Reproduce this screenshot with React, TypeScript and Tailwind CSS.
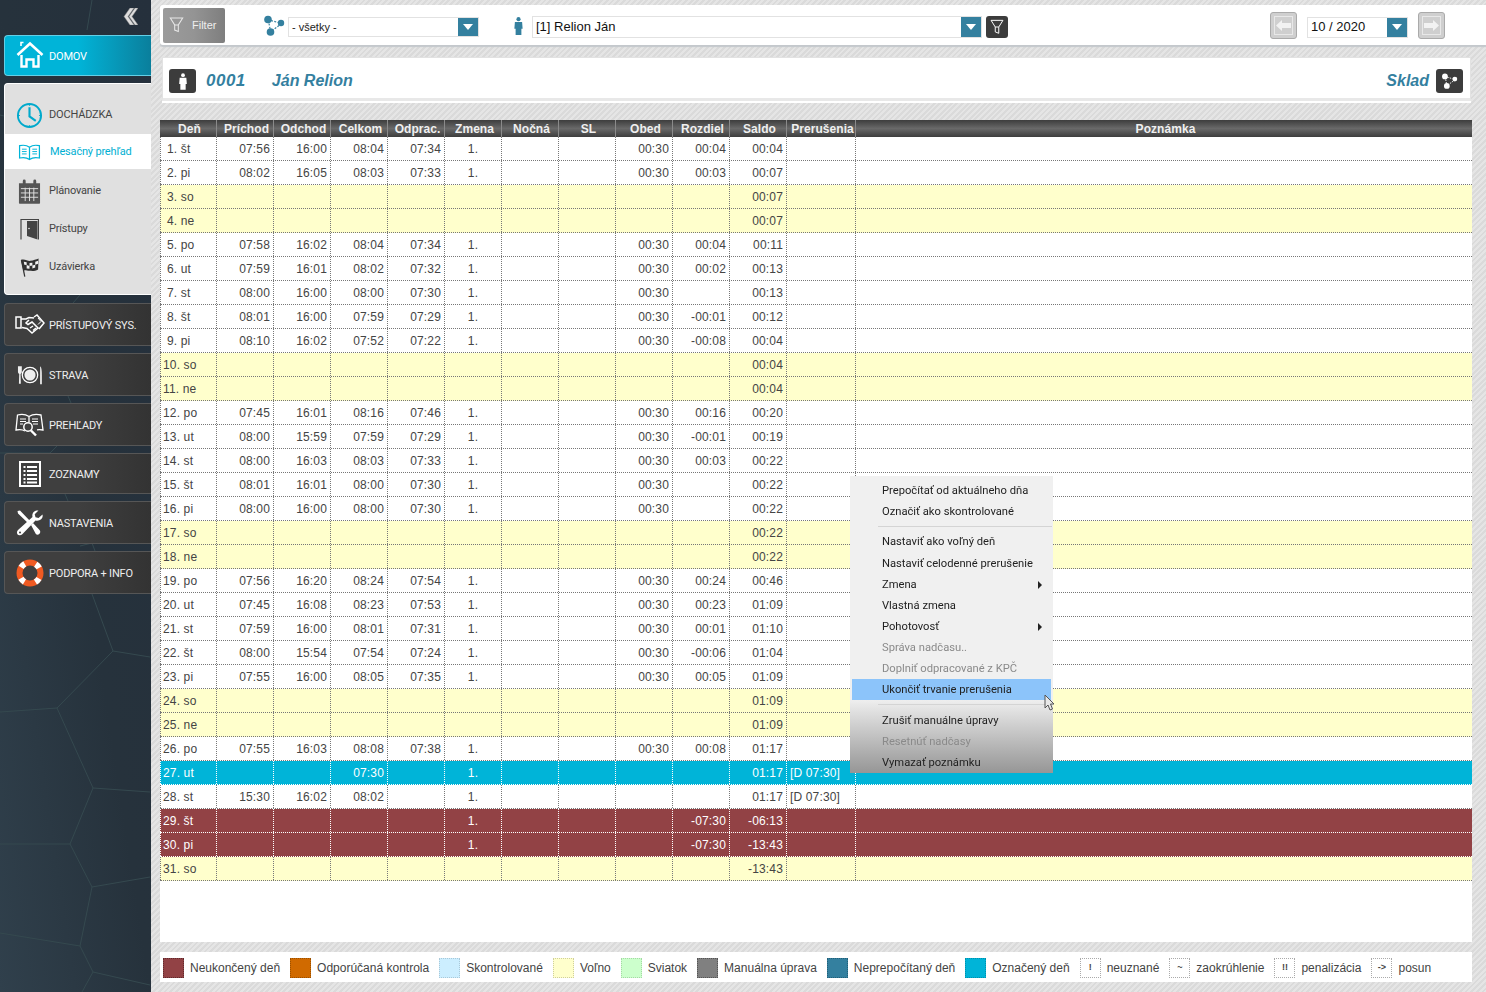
import type { ReactNode } from "react";

const COLS =
  "grid grid-cols-[57px_57px_57px_57px_57px_57px_57px_57px_57px_57px_57px_69px_1fr]";

type Kind = "work" | "free" | "marked" | "late";

interface Row {
  day: string;
  kind: Kind;
  cells: string[];
  saldo: string;
  note?: string;
}

// prichod, odchod, celkom, odprac, zmena, nocna, sl, obed, rozdiel
function w(day: string, a: string, b: string, c: string, d: string, diff: string, saldo: string): Row {
  return { day, kind: "work", cells: [a, b, c, d, "1.", "", "", "00:30", diff], saldo };
}
function f(day: string, saldo: string): Row {
  return { day, kind: "free", cells: ["", "", "", "", "", "", "", "", ""], saldo };
}

const rows: Row[] = [
  w("1. št", "07:56", "16:00", "08:04", "07:34", "00:04", "00:04"),
  w("2. pi", "08:02", "16:05", "08:03", "07:33", "00:03", "00:07"),
  f("3. so", "00:07"),
  f("4. ne", "00:07"),
  w("5. po", "07:58", "16:02", "08:04", "07:34", "00:04", "00:11"),
  w("6. ut", "07:59", "16:01", "08:02", "07:32", "00:02", "00:13"),
  w("7. st", "08:00", "16:00", "08:00", "07:30", "", "00:13"),
  w("8. št", "08:01", "16:00", "07:59", "07:29", "-00:01", "00:12"),
  w("9. pi", "08:10", "16:02", "07:52", "07:22", "-00:08", "00:04"),
  f("10. so", "00:04"),
  f("11. ne", "00:04"),
  w("12. po", "07:45", "16:01", "08:16", "07:46", "00:16", "00:20"),
  w("13. ut", "08:00", "15:59", "07:59", "07:29", "-00:01", "00:19"),
  w("14. st", "08:00", "16:03", "08:03", "07:33", "00:03", "00:22"),
  w("15. št", "08:01", "16:01", "08:00", "07:30", "", "00:22"),
  w("16. pi", "08:00", "16:00", "08:00", "07:30", "", "00:22"),
  f("17. so", "00:22"),
  f("18. ne", "00:22"),
  w("19. po", "07:56", "16:20", "08:24", "07:54", "00:24", "00:46"),
  w("20. ut", "07:45", "16:08", "08:23", "07:53", "00:23", "01:09"),
  w("21. st", "07:59", "16:00", "08:01", "07:31", "00:01", "01:10"),
  w("22. št", "08:00", "15:54", "07:54", "07:24", "-00:06", "01:04"),
  w("23. pi", "07:55", "16:00", "08:05", "07:35", "00:05", "01:09"),
  f("24. so", "01:09"),
  f("25. ne", "01:09"),
  w("26. po", "07:55", "16:03", "08:08", "07:38", "00:08", "01:17"),
  { day: "27. ut", kind: "marked", cells: ["", "", "07:30", "", "1.", "", "", "", ""], saldo: "01:17", note: "[D 07:30]" },
  { day: "28. st", kind: "work", cells: ["15:30", "16:02", "08:02", "", "1.", "", "", "", ""], saldo: "01:17", note: "[D 07:30]" },
  { day: "29. št", kind: "late", cells: ["", "", "", "", "1.", "", "", "", "-07:30"], saldo: "-06:13" },
  { day: "30. pi", kind: "late", cells: ["", "", "", "", "1.", "", "", "", "-07:30"], saldo: "-13:43" },
  { day: "31. so", kind: "free", cells: ["", "", "", "", "", "", "", "", ""], saldo: "-13:43" },
];

const headers = ["Deň", "Príchod", "Odchod", "Celkom", "Odprac.", "Zmena", "Nočná", "SL", "Obed", "Rozdiel", "Saldo", "Prerušenia", "Poznámka"];

const kindClass: Record<Kind, string> = {
  work: "bg-white text-[#444] border-[#777]",
  free: "bg-[#ffffcc] text-[#444] border-[#777]",
  marked: "bg-[#00b4d8] text-white border-white",
  late: "bg-[#924245] text-white border-white",
};

function Funnel({ className }: { className: string }) {
  return (
    <svg viewBox="0 0 20 22" className={className} fill="none" stroke="currentColor" strokeWidth="1.4">
      <path d="M1.5 1.5h17L12.5 11v9l-5-2v-7z" />
      <path d="M7.5 11h5" />
    </svg>
  );
}

function Nodes({ className }: { className: string }) {
  return (
    <svg viewBox="0 0 22 21" className={className} fill="currentColor">
      <circle cx="5" cy="4.5" r="3.8" />
      <circle cx="18" cy="8" r="3.2" />
      <circle cx="7.5" cy="17" r="3.8" />
      <path d="M8 5.5l7 2M16 10.5l-6 4.5M6 8.5l1 5" stroke="currentColor" strokeWidth="1.2" strokeDasharray="2 1.4" />
    </svg>
  );
}

function Person({ className }: { className: string }) {
  return (
    <svg viewBox="0 0 12 20" className={className} fill="currentColor">
      <circle cx="6" cy="2.4" r="2.3" />
      <path d="M2 5.6h8l.6 7.4H9.2V20H2.8v-7H1.4z" />
    </svg>
  );
}

function Arrow() {
  return (
    <div className="w-[20px] self-stretch bg-[#34809f] flex items-center justify-center">
      <div className="w-0 h-0 border-x-[5px] border-x-transparent border-t-[6px] border-t-white" />
    </div>
  );
}

function ArrowBtn({ dir }: { dir: "l" | "r" }) {
  return (
    <div className="w-[27px] h-[27px] rounded-[3px] border border-[#aaa] bg-[#cfcfcf] flex items-center justify-center">
      <div className="w-[19px] h-[19px] border border-[#e8e8e8] flex items-center justify-center">
        <svg viewBox="0 0 15 11" className={`w-[15px] h-[11px] text-[#f2f2f2] ${dir === "r" ? "rotate-180" : ""}`} fill="currentColor">
          <path d="M0 5.5L6 0v3h9v5H6v3z" />
        </svg>
      </div>
    </div>
  );
}

const iconHome = (
  <svg viewBox="0 0 28 27" className="w-[28px] h-[27px] -mt-[3px]" fill="none" stroke="white">
    <path d="M1.5 14L14 2.5 26.5 14" strokeWidth="2.6" />
    <path d="M5 5V1.5h2.5" strokeWidth="1.6" />
    <path d="M5.5 14v11.5h5V18.5h7v7h5V14" strokeWidth="2.4" />
  </svg>
);
const iconClock = (
  <svg viewBox="0 0 28 28" className="w-[27px] h-[27px]" fill="none" stroke="#00a9cc">
    <circle cx="14" cy="14" r="12" strokeWidth="2" />
    <path d="M14 5.5V15l6.5 4.5" strokeWidth="2.2" />
    <path d="M14 2v2M14 24v2M2 14h2M24 14h2" strokeWidth="1.2" />
  </svg>
);
const iconBook = (
  <svg viewBox="0 0 24 18" className="w-[23px] h-[17px]" fill="none" stroke="#00b4d8" strokeWidth="1.3">
    <path d="M12 3.5C9.5 1.5 5 1 1.5 1.8v13C5 14 9.5 14.5 12 16.5c2.5-2 7-2.5 10.5-1.7v-13C19 1 14.5 1.5 12 3.5zM12 3.5v13" />
    <path d="M4 5.5h5M4 8h5M4 10.5h5M15 5.5h5M15 8h5M15 10.5h5" strokeWidth="1" />
  </svg>
);
const iconCalendar = (
  <svg viewBox="0 0 24 26" className="w-[23px] h-[25px]" fill="#555">
    <path d="M1 4.5h22V25a.8.8 0 0 1-.8.8H1.8A.8.8 0 0 1 1 25z" />
    <rect x="5" y="0.5" width="3" height="7" rx="1.5" />
    <rect x="16" y="0.5" width="3" height="7" rx="1.5" />
    <path d="M3 10h18M3 14.5h18M3 19h18M7.5 9v14M12 9v14M16.5 9v14" stroke="#e0e0e0" strokeWidth="1" />
  </svg>
);
const iconDoor = (
  <svg viewBox="0 0 19 21" className="w-[19px] h-[21px]">
    <path d="M1 20.5V.5h17.5v20" fill="none" stroke="#444" strokeWidth="1.2" />
    <path d="M7 2h10.5v18.5L7 17z" fill="#444" />
    <circle cx="9" cy="9.5" r="0.8" fill="#eee" />
  </svg>
);
const iconFlag = (
  <svg viewBox="0 0 21 22" className="w-[20px] h-[21px]">
    <path d="M1 3c4-1.5 7 1.5 10 1s6-1.500 8.500-2.500L19 13c-3 2-6 1.500-9 1.500S5 13 3.500 14.500z" fill="#333" />
    <path d="M4 5l3 .5v3L4.500 8zM10 6.200l3-.3v3l-3 .4zM16 5l3-1v3l-3 1zM7 8.500l3 .8v3L7 12zM13 9l3-1v3l-3 1z" fill="#f2f2f2" />
    <path d="M1.500 3l3.500 17.500" stroke="#333" strokeWidth="1.300" />
  </svg>
);
const iconShake = (
  <svg viewBox="0 0 30 22" className="w-[30px] h-[22px]" fill="none" stroke="white" strokeWidth="1.500">
    <path d="M1 3h5v11H1zM6 5h5l3-1.500 5 .5M14 6l-3 3 2 1.500 4-2.500 6 6-6 5-5-4.500-5-1M19 3l3-2 7 8-5 6" />
    <path d="M18 12l-3 2M21 14l-3 2.500" />
    <path d="M23 4l3 3.500-3 3" strokeWidth="1" />
  </svg>
);
const iconPlate = (
  <svg viewBox="0 0 27 20" className="w-[26px] h-[20px]">
    <circle cx="13.500" cy="10" r="8" fill="none" stroke="white" strokeWidth="1.300" />
    <circle cx="13.500" cy="10" r="5.800" fill="#eee" />
    <path d="M1 1v5.500c0 1.500 1 2 1.300 2.500l-.300 10h2l-.300-10c.300-.500 1.300-1 1.300-2.500V1" fill="#eee" />
    <path d="M24 1c1.500 1 1.800 4 1.800 9v9.500H24z" fill="#eee" />
  </svg>
);
const iconReports = (
  <svg viewBox="0 0 29 24" className="w-[29px] h-[24px]" fill="none" stroke="white" strokeWidth="1.300">
    <path d="M14 3.500C11 1.500 6 1 2.500 2L1 17c4-.8 7-.3 9 1M14 3.500C17 1.500 22 1 26 2l2 15c-2-.4-4-.5-6-.2M14 3.500V9" />
    <path d="M5 6h6M5 8.500h6M5 11h3M17 6h6M17 8.500h6M18 11h5" strokeWidth="1" />
    <circle cx="13" cy="14" r="4.200" strokeWidth="1.500" />
    <path d="M16 17.500l5 5" strokeWidth="2.400" />
  </svg>
);
const iconList = (
  <svg viewBox="0 0 22 26" className="w-[22px] h-[26px]">
    <rect x="1" y="1" width="20" height="24" fill="none" stroke="white" strokeWidth="2" />
    <path d="M4.500 6h2M8 6h10M4.500 10h2M8 10h10M4.500 14h2M8 14h10M4.500 18h2M8 18h10M4.500 21.500h2M8 21.500h10" stroke="white" strokeWidth="1.800" />
  </svg>
);
const iconTools = (
  <svg viewBox="0 0 27 26" className="w-[27px] h-[26px]" fill="white">
    <path d="M1.500 1l2.500-.500 11 11.500-2 2L2 3.500zM15 15l2-2 6.500 7c1.300 1.500.800 3-.300 4s-2.500 1-3.500-.300z" />
    <path d="M26.500 4.500l-4 3.500-3-.800-.800-3 3.800-3.700C19 0 15.500 2.500 16.500 7L2 20c-2 2-1 5 1.500 5.300 1 .1 2-.3 2.800-1.100L19.500 10.500c4.500 1 8-2 7-6z" />
    <circle cx="4" cy="22.500" r="1" fill="#3c3c3c" />
  </svg>
);
const iconBuoy = (
  <svg viewBox="0 0 28 28" className="w-[28px] h-[28px]" fill="none">
    <circle cx="14" cy="14" r="10.500" stroke="#f05a22" strokeWidth="6" />
    <circle cx="14" cy="14" r="10.500" stroke="white" strokeWidth="6" strokeDasharray="5 11.500" strokeDashoffset="-5.700" />
  </svg>
);

function DarkItem({ icon, label, h }: { icon: ReactNode; label: string; h: string }) {
  return (
    <div className={`${h} ml-[4px] flex items-center rounded-l-[4px] border border-r-0 border-[#565656] bg-linear-to-r from-[#3f3f3f] via-[#3f3f3f] to-[#333]`}>
      <div className="w-[44px] pl-[5px] flex justify-center shrink-0">{icon}</div>
      <span className="pt-[4px] text-[11px] tracking-[-0.18px] text-[#eee] whitespace-nowrap">{label}</span>
    </div>
  );
}

function SubItem({ icon, label, active }: { icon: ReactNode; label: string; active?: boolean }) {
  return (
    <div className={`flex items-center ${active ? "bg-white h-[35px] mb-[3px] pt-[1px] text-[#00afd2]" : "h-[38px] text-[#444]"}`}>
      <div className="w-[44px] pl-[5px] flex justify-center shrink-0">{icon}</div>
      <span className={`text-[11px] tracking-[-0.18px] whitespace-nowrap ${active ? "ml-[1px]" : ""}`}>{label}</span>
    </div>
  );
}

function Sidebar() {
  return (
    <aside className="relative w-[151px] shrink-0 bg-linear-to-tr from-[#30404c] via-[#26323c] to-[#25303c] font-['Roboto',sans-serif]">
      {/* hexagon lines of the background */}
      <svg viewBox="0 0 151 992" className="absolute inset-0 w-[151px] h-[992px]" fill="none" stroke="#35494f" strokeWidth="1">
        <path d="M92 0L87 30M0 115l8 2M80 295l-7 8M68 396l3 7M57 446l-7 7H0M65 494l3 7M92 594l21 57L57 708 0 712M113 651l37 6M57 708l36 80-23 56H0M93 788l57 4M70 844l22 43-12 59L0 933M92 887l58-10M80 946l13 26 57 13M93 972l-11 20" />
        <path d="M80 546l12-3 3 8" />
      </svg>
      <div className="relative flex flex-col">
        <div className="h-[35px] flex justify-end items-start pt-[8px] pr-[13px]">
          <svg viewBox="0 0 16 17" className="w-[16px] h-[17px]" fill="#ddd" stroke="#8a8a8a" strokeWidth="0.5">
            <path d="M8 0h4L6 8.500 12 17H8L2 8.500zM13 0h3l-6 8.500 6 8.500h-3L7 8.500z" />
          </svg>
        </div>
        <div className="h-[41px] ml-[4px] flex items-center rounded-l-[4px] border border-r-0 border-[#63cfe6] bg-linear-to-r from-[#00b4d8] via-[#00b4d8] to-[#0a7f9c]">
          <div className="w-[44px] pl-[5px] flex justify-center shrink-0">{iconHome}</div>
          <span className="pt-[4px] text-[11px] tracking-[-0.18px] text-white">DOMOV</span>
        </div>
        <div className="mt-[7px] h-[212px] ml-[4px] rounded-l-[4px] border border-r-0 border-white bg-[#e0e0e0] pt-[12px]">
          <SubItem icon={iconClock} label="DOCHÁDZKA" />
          <SubItem icon={iconBook} label="Mesačný prehľad" active />
          <SubItem icon={iconCalendar} label="Plánovanie" />
          <SubItem icon={iconDoor} label="Prístupy" />
          <SubItem icon={iconFlag} label="Uzávierka" />
        </div>
        <div className="mt-[8px] flex flex-col gap-[7px]">
          <DarkItem icon={iconShake} label="PRÍSTUPOVÝ SYS." h="h-[43px]" />
          <DarkItem icon={iconPlate} label="STRAVA" h="h-[43px]" />
          <DarkItem icon={iconReports} label="PREHĽADY" h="h-[43px]" />
          <DarkItem icon={iconList} label="ZOZNAMY" h="h-[41px]" />
          <DarkItem icon={iconTools} label="NASTAVENIA" h="h-[43px]" />
          <DarkItem icon={iconBuoy} label="PODPORA + INFO" h="h-[43px]" />
        </div>
      </div>
    </aside>
  );
}

function TopBar() {
  return (
    <div className="ml-[9px] h-[40px] bg-white rounded-l-[3px] shadow-[0_2px_1px_#c4c8cc] flex items-center">
      <div className="ml-[3px] h-[35px] w-[62px] rounded-[2px] bg-linear-to-r from-[#9b9b9b] via-[#949494] to-[#7e7e7e] flex items-center text-[#eee] text-[11px]">
        <Funnel className="w-[15px] h-[16px] ml-[6px] text-[#e8e8e8]" />
        <span className="ml-[8px]">Filter</span>
      </div>
      <Nodes className="ml-[38px] w-[22px] h-[21px] text-[#34809f]" />
      <div className="ml-[3px] mt-[4px] w-[191px] h-[20px] border border-[#e2e2e2] flex items-center justify-between text-[11px] text-[#222]">
        <span className="ml-[3px]">- všetky -</span>
        <Arrow />
      </div>
      <Person className="ml-[34px] mt-[2px] w-[11px] h-[18px] text-[#34809f]" />
      <div className="ml-[8px] mt-[4px] w-[450px] h-[22px] border border-[#e2e2e2] flex items-center justify-between text-[13px] text-[#111]">
        <span className="ml-[3px]">[1] Relion Ján</span>
        <Arrow />
      </div>
      <div className="ml-[4px] mt-[4px] w-[22px] h-[22px] rounded-[3px] bg-[#3c3c3c] flex items-center justify-center">
        <Funnel className="w-[14px] h-[16px] text-white" />
      </div>
      <div className="ml-[262px]">
        <ArrowBtn dir="l" />
      </div>
      <div className="ml-[10px] mt-[4px] w-[101px] h-[21px] border border-[#e2e2e2] flex items-center justify-between text-[13px] text-[#111]">
        <span className="ml-[3px]">10 / 2020</span>
        <Arrow />
      </div>
      <div className="ml-[10px]">
        <ArrowBtn dir="r" />
      </div>
    </div>
  );
}

function TitleBar() {
  return (
    <div className="mt-[12px] ml-[11px] mr-[15px] h-[44px] pt-[6px] bg-white border border-[#e2e2e2] border-b-[3px] border-b-[#e8e8e8] flex items-center justify-between shadow-[0_2px_0_#fff]">
      <div className="flex items-center">
        <div className="ml-[6px] w-[27px] h-[24px] rounded-[3px] bg-[#3c3c3c] flex items-center justify-center">
          <Person className="w-[10px] h-[17px] text-white" />
        </div>
        <span className="ml-[10px] text-[17px] tracking-[0.5px] font-bold italic text-[#34809f]">0001</span>
        <span className="ml-[26px] text-[16px] font-bold italic text-[#34809f]">Ján Relion</span>
      </div>
      <div className="flex items-center">
        <span className="text-[16px] font-bold italic text-[#34809f]">Sklad</span>
        <div className="ml-[7px] mr-[7px] w-[27px] h-[24px] rounded-[3px] bg-[#3c3c3c] flex items-center justify-center">
          <Nodes className="w-[17px] h-[16px] text-white" />
        </div>
      </div>
    </div>
  );
}

function Table() {
  return (
    <div className="mt-[19px] ml-[9px] mr-[14px] h-[822px] bg-white text-[12px] tracking-[0.15px]">
      <div className={`${COLS} h-[17px] bg-linear-to-b from-[#3d3d3d] via-[#696969] to-[#3d3d3d]`}>
        {headers.map((h, i) => (
          <div
            key={h}
            className={`flex items-center justify-center pl-[3px] font-bold text-[#f0f0f0] tracking-[0.05px] whitespace-nowrap ${i < 12 ? "border-r border-[#8a8a8a]" : ""}`}
          >
            {h}
          </div>
        ))}
      </div>
      {rows.map((r) => (
        <div key={r.day} className={`${COLS} h-[24px] border-b border-dotted ${kindClass[r.kind]}`}>
          <div className={`border-l border-r border-dotted border-inherit flex items-center ${r.day.length > 5 ? "pl-[2px]" : "pl-[6px]"}`}>
            {r.day}
          </div>
          {r.cells.map((c, i) => (
            <div
              key={i}
              className={`border-r border-dotted border-inherit flex items-center ${i === 4 ? "justify-center" : "justify-end pr-[3px]"}`}
            >
              {c}
            </div>
          ))}
          <div className="border-r border-dotted border-inherit flex items-center justify-end pr-[3px]">{r.saldo}</div>
          <div className="border-r border-dotted border-inherit flex items-center pl-[3px]">{r.note}</div>
          <div />
        </div>
      ))}
    </div>
  );
}

const legendItems: { label: string; swatch: string; mark?: string }[] = [
  { label: "Neukončený deň", swatch: "bg-[#924245] border-[#5f2a2c]" },
  { label: "Odporúčaná kontrola", swatch: "bg-[#d06a00] border-[#9a5000]" },
  { label: "Skontrolované", swatch: "bg-[#cceeff] border-[#a9c8d8]" },
  { label: "Voľno", swatch: "bg-[#ffffcc] border-[#cfcf9c]" },
  { label: "Sviatok", swatch: "bg-[#ccffcc] border-[#a5d8a5]" },
  { label: "Manuálna úprava", swatch: "bg-[#808080] border-[#555]" },
  { label: "Neprepočítaný deň", swatch: "bg-[#34809f] border-[#225f78]" },
  { label: "Označený deň", swatch: "bg-[#00b4d8] border-[#0090ad]" },
  { label: "neuznané", swatch: "bg-white border-[#aaa]", mark: "!" },
  { label: "zaokrúhlenie", swatch: "bg-white border-[#aaa]", mark: "~" },
  { label: "penalizácia", swatch: "bg-white border-[#aaa]", mark: "!!" },
  { label: "posun", swatch: "bg-white border-[#aaa]", mark: "->" },
];

function Legend() {
  return (
    <div className="mt-[10px] ml-[9px] mr-[14px] h-[30px] pt-[1px] bg-white flex items-center pl-[3px] gap-[10px] text-[12px] text-[#444]">
      {legendItems.map((l) => (
        <div key={l.label} className="flex items-center gap-[6px] whitespace-nowrap">
          <div className={`w-[21px] h-[20px] border border-dotted flex items-center justify-center text-[9px] font-bold ${l.swatch}`}>
            {l.mark}
          </div>
          <span>{l.label}</span>
        </div>
      ))}
    </div>
  );
}

type MenuEntry = { t: string; off?: boolean; sub?: boolean; on?: boolean } | "sep";

const menu: MenuEntry[] = [
  { t: "Prepočítať od aktuálneho dňa" },
  { t: "Označiť ako skontrolované" },
  "sep",
  { t: "Nastaviť ako voľný deň" },
  { t: "Nastaviť celodenné prerušenie" },
  { t: "Zmena", sub: true },
  { t: "Vlastná zmena" },
  { t: "Pohotovosť", sub: true },
  { t: "Správa nadčasu..", off: true },
  { t: "Doplniť odpracované z KPČ", off: true },
  { t: "Ukončiť trvanie prerušenia", on: true },
  "sep",
  { t: "Zrušiť manuálne úpravy" },
  { t: "Resetnúť nadčasy", off: true },
  { t: "Vymazať poznámku" },
];

function ContextMenu() {
  return (
    <div className="absolute left-[850px] top-[476px] w-[203px] h-[297px] pt-[4px] bg-linear-to-b from-[#f0f0f0] via-[#f0f0f0] via-75% to-[#969696] font-['Roboto',sans-serif] text-[11.2px] text-[#222]">
      {menu.map((m, i) =>
        m === "sep" ? (
          <div key={i} className="h-[9px] flex items-center pl-[28px] pr-[1px]">
            <div className="h-px w-full bg-[#d4d4d4]" />
          </div>
        ) : (
          <div
            key={m.t}
            className={`h-[21.15px] mx-[2px] pt-[2px] pl-[30px] pr-[9px] flex items-center justify-between ${m.on ? "bg-[#8cc4fa]" : ""} ${m.off ? "text-[#8a8a8a]" : ""}`}
          >
            <span className="blur-[0.25px]">{m.t}</span>
            {m.sub && <div className="w-0 h-0 border-y-[4px] border-y-transparent border-l-[4px] border-l-[#222]" />}
          </div>
        ),
      )}
      <svg viewBox="0 0 11 17" className="absolute left-[194px] top-[218px] w-[11px] h-[17px]" fill="#e8e8e8" stroke="#555" strokeWidth="1">
        <path d="M1 1v13l3-3 2 5 2.500-1-2-5H10z" />
      </svg>
    </div>
  );
}

export default function App() {
  return (
    <div className="relative flex h-screen overflow-hidden bg-[#ddd] font-['Liberation_Sans',Arial,sans-serif]">
      <Sidebar />
      <main className="flex-1 min-w-0 pt-[5px] bg-[repeating-linear-gradient(135deg,#e5e5e5_0px,#e5e5e5_2px,#dadada_2px,#dadada_4px)]">
        <TopBar />
        <TitleBar />
        <Table />
        <Legend />
      </main>
      <ContextMenu />
    </div>
  );
}
